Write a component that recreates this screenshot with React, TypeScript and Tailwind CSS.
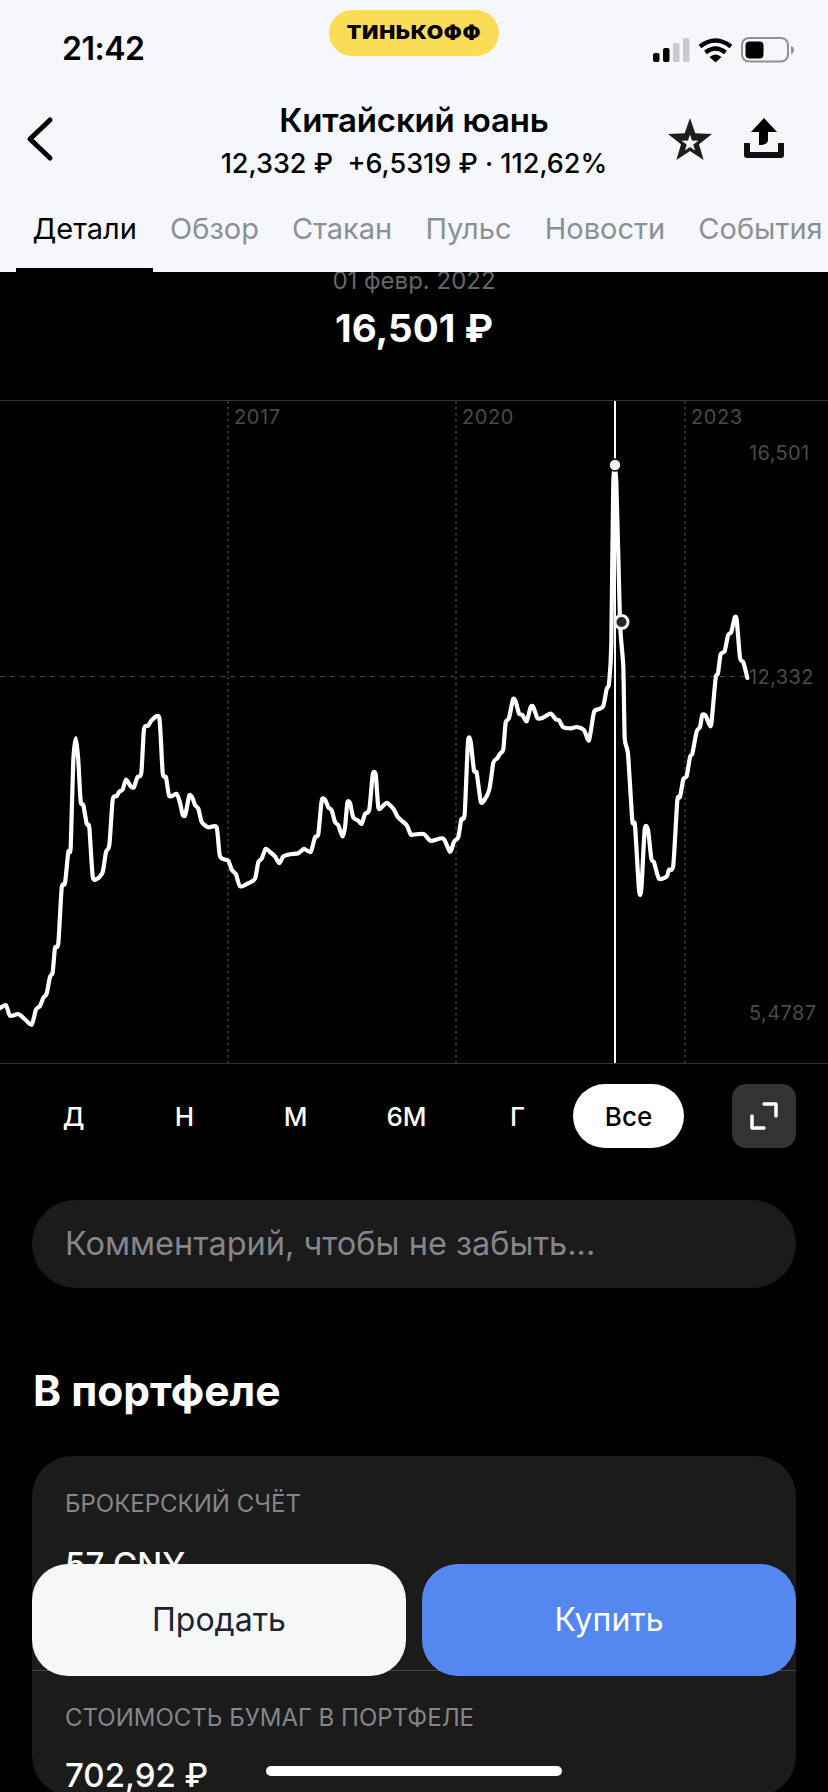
const FONT = { fontFamily: "Inter, 'Noto Sans', sans-serif" };

const TABS = ["Детали", "Обзор", "Стакан", "Пульс", "Новости", "События"];
const PERIODS = ["Д", "Н", "М", "6М", "Г", "Все"];

// price history, x in thirds of a pixel, y in 0.4464px steps, measured from the chart's left edge
const LEFT_SAMPLES: number[][] = [
  [0,1405],[18,1398],[30,1422],[55,1418],[75,1430],[95,1442],[108,1408],[120,1400],[130,1382],[140,1372],
  [150,1335],[158,1325],[165,1270],[175,1260],[185,1135],[195,1125],[205,1055],[212,1045],[220,850],[228,800],
  [235,850],[242,942],[250,950],[260,992],[268,1000],[278,1110],[292,1115],[308,1100],[318,1055],[328,1040],
  [338,938],[350,930],[358,920],[368,915],[378,893],[392,908],[402,910],[412,888],[424,878],[432,780],
  [445,772],[455,760],[478,755],[488,878],[498,888],[508,930],[530,925],[540,945],[548,972],[556,972],
  [568,928],[578,935],[585,950],[595,958],[605,988],[625,1000],[650,1000],[660,1065],[685,1075],[695,1095],
  [708,1105],[720,1132],[745,1125],[765,1115],[775,1078],[785,1070],[797,1048],[810,1055],[825,1065],[838,1080],
  [850,1065],[870,1060],[895,1058],[912,1048],[932,1055],[945,1022],[955,1015],[965,940],[975,938],[985,955],
  [995,962],[1005,988],[1015,995],[1027,1020],[1035,1000],[1042,945],[1050,945],[1060,978],[1075,985],[1085,992],
  [1095,970],[1108,960],[1118,882],[1127,882],[1135,955],[1145,955],[1160,945],[1180,958],[1192,975],[1205,985],
  [1220,995],[1232,1016],
];

const RIGHT_SAMPLES: number[][] = [
  [0,1016],[30,1015],[50,1030],[88,1025],[108,1055],[120,1032],[133,1022],[142,982],[152,970],[162,808],
  [170,808],[180,872],[188,878],[200,942],[210,940],[226,915],[238,855],[250,845],[258,835],[268,825],
  [275,765],[285,755],[297,713],[305,718],[315,745],[325,748],[338,762],[350,730],[358,730],[370,755],
  [385,755],[410,745],[425,758],[435,760],[447,775],[470,778],[488,775],[510,782],[525,805],[540,742],
  [555,735],[568,728],[578,690],[585,678],[592,590],[598,225],[607,225],[618,540],[628,640],[632,800],
  [642,835],[655,985],[663,995],[675,1140],[682,1140],[692,1005],[702,1005],[712,1070],[720,1078],[735,1115],
  [758,1110],[765,1095],[778,1085],[790,940],[798,932],[808,892],[818,885],[828,842],[835,835],[848,785],
  [858,775],[865,748],[875,750],[885,768],[892,768],[905,665],[912,655],[920,612],[932,605],[942,570],
  [952,562],[962,530],[968,535],[978,620],[988,630],[1000,665],
];

// the chart box starts 400px down the page, samples were taken from 380
const toPoint = (x: number, y: number, offset: number) => [offset + x / 3, y * 0.4464 - 20];

const POINTS = [
  ...LEFT_SAMPLES.map(([x, y]) => toPoint(x, y, 0)),
  ...RIGHT_SAMPLES.map(([x, y]) => toPoint(x, y, 414)),
];

// catmull-rom through every sample, with a low tension so the peaks stay sharp
function buildPath(points: number[][]) {
  const k = 0.11;
  let d = `M${points[0][0].toFixed(1)} ${points[0][1].toFixed(1)}`;
  for (let i = 0; i < points.length - 1; i++) {
    const p0 = points[Math.max(i - 1, 0)];
    const p1 = points[i];
    const p2 = points[i + 1];
    const p3 = points[Math.min(i + 2, points.length - 1)];
    const c1x = p1[0] + (p2[0] - p0[0]) * k;
    const c1y = p1[1] + (p2[1] - p0[1]) * k;
    const c2x = p2[0] - (p3[0] - p1[0]) * k;
    const c2y = p2[1] - (p3[1] - p1[1]) * k;
    d += ` C${c1x.toFixed(1)} ${c1y.toFixed(1)} ${c2x.toFixed(1)} ${c2y.toFixed(1)} ${p2[0].toFixed(1)} ${p2[1].toFixed(1)}`;
  }
  return d;
}

function StatusIcons() {
  return (
    <svg width="142" height="27" viewBox="0 0 142 27" className="block">
      <rect x="0" y="16" width="6.5" height="9" rx="2" fill="#000" />
      <rect x="10" y="11" width="6.5" height="14" rx="2" fill="#000" />
      <rect x="20" y="6" width="6.5" height="19" rx="1.5" fill="#c9cbce" />
      <rect x="30" y="1" width="6.5" height="24" rx="1.5" fill="#c9cbce" />
      <path d="M47 9.5 Q62.5 -2.5 78 9.5" fill="none" stroke="#000" strokeWidth="4.5" />
      <path d="M52.5 15.5 Q62.5 7.5 72.5 15.5" fill="none" stroke="#000" strokeWidth="4.5" />
      <path d="M56.5 20 Q62.5 15 68.5 20 L62.5 25.5 Z" fill="#000" />
      <rect x="89" y="1" width="46" height="23.5" rx="7" fill="none" stroke="#8f9193" strokeWidth="2" />
      <rect x="92.5" y="4.5" width="18" height="17" rx="4" fill="#000" />
      <path d="M138 9 Q141 10 141 13 Q141 16 138 17 Z" fill="#8f9193" />
    </svg>
  );
}

function Header() {
  return (
    <header className="h-[272px] bg-[#f5f7fa] text-black">
      <div className="relative h-[91px]">
        <span className="absolute left-[62px] top-[30px] text-[32px] leading-[38px] font-semibold tracking-[-0.5px]">
          21:42
        </span>
        <div className="absolute left-[329px] top-[10px] flex h-[46px] w-[170px] items-center justify-center rounded-full bg-[#fbdc57]">
          <span className="text-[19px] font-black tracking-[0.6px] [transform:scaleX(1.12)]">ТИНЬКОФФ</span>
        </div>
        <div className="absolute left-[653px] top-[37px]">
          <StatusIcons />
        </div>
      </div>

      <div className="relative h-[95px]">
        <svg width="30" height="46" viewBox="0 0 30 46" className="absolute left-[25px] top-[25px]">
          <path d="M25 4 L5 23 L25 42" fill="none" stroke="#000" strokeWidth="5" strokeLinecap="round" strokeLinejoin="round" />
        </svg>
        <div className="flex flex-col items-center pt-[9px]">
          <span className="text-[33px] leading-[40px] font-semibold tracking-[-0.2px]">Китайский юань</span>
          <span className="mt-[8px] whitespace-pre text-[27px] leading-[32px] font-medium">
            12,332 ₽{"  "}+6,5319 ₽ · 112,62%
          </span>
        </div>
        <svg width="44" height="42" viewBox="0 0 44 42" className="absolute left-[668px] top-[27px]">
          <path d="M22 0 L27.3 15.3 L44 16 L31 26.3 L35.6 42 L22 33 L8.4 42 L13 26.3 L0 16 L16.7 15.3 Z" fill="#1d1d1d" />
          <path d="M22 16.5 L24 22.5 L30.5 22.7 L25.3 26.6 L27 32.6 L22 29 L17 32.6 L18.7 26.6 L13.5 22.7 L20 22.5 Z" fill="#f5f7fa" />
        </svg>
        <svg width="40" height="40" viewBox="0 0 40 40" className="absolute left-[744px] top-[27px]">
          <path d="M20 0 L33 14 H24 V22 Q24 27 15 27 V14 H7 Z" fill="#000" />
          <path d="M3 25 V37 H37 V25" fill="none" stroke="#111" strokeWidth="6" strokeLinejoin="round" />
        </svg>
      </div>

      <nav className="flex h-[86px] overflow-hidden pl-[16px]">
        {TABS.map((tab, i) => (
          <div
            key={tab}
            className={
              "flex h-full shrink-0 items-start px-[16.6px] pt-[25px] text-[29px] leading-[36px] " +
              (i === 0 ? "border-b-[4px] border-black text-black" : "text-[#8c9096]")
            }
          >
            {tab}
          </div>
        ))}
      </nav>
    </header>
  );
}

function Chart() {
  const years = [
    { label: "2017", x: 228 },
    { label: "2020", x: 456 },
    { label: "2023", x: 685 },
  ];
  const prices = [
    { label: "16,501", top: 40 },
    { label: "12,332", top: 264 },
    { label: "5,4787", top: 600 },
  ];

  return (
    <div className="relative h-[664px] border-y border-[#333]">
      <svg width="828" height="662" viewBox="0 0 828 662" className="block">
        <line x1="0" x2="747" y1="275.5" y2="275.5" stroke="#444" strokeWidth="1" strokeDasharray="5 5" />
        {years.map((y) => (
          <line key={y.label} x1={y.x} x2={y.x} y1="0" y2="662" stroke="#444" strokeWidth="1.5" strokeDasharray="2.5 3.5" />
        ))}
        <path d={buildPath(POINTS)} fill="none" stroke="#fff" strokeWidth="4.2" strokeLinejoin="round" strokeLinecap="round" />
        <line x1="615" x2="615" y1="0" y2="662" stroke="#fff" strokeWidth="2" />
        <circle cx="615" cy="64" r="6" fill="#f2f2f2" stroke="#000" strokeWidth="1.5" />
        <circle cx="621.5" cy="221" r="6.5" fill="#1e2733" stroke="#f1f1f1" strokeWidth="3" />
      </svg>
      {years.map((y) => (
        <span
          key={y.label}
          className="absolute top-[4px] text-[20px] leading-[24px] tracking-[0.6px] text-[#4a4a4a]"
          style={{ left: y.x + 6 }}
        >
          {y.label}
        </span>
      ))}
      {prices.map((p) => (
        <span
          key={p.label}
          className="absolute left-[749px] text-[20px] leading-[24px] tracking-[0.4px] text-[#4a4a4a]"
          style={{ top: p.top }}
        >
          {p.label}
        </span>
      ))}
    </div>
  );
}

function PeriodRow() {
  return (
    <div className="flex h-[84px] items-end pl-[18px] pr-[32px]">
      <div className="flex flex-1">
        {PERIODS.map((p) => (
          <div
            key={p}
            className={
              "flex h-[64px] w-[111px] items-center justify-center rounded-full text-[26px] font-medium " +
              (p === "Все" ? "bg-white text-black" : "text-white")
            }
          >
            {p}
          </div>
        ))}
      </div>
      <div className="flex h-[64px] w-[64px] items-center justify-center rounded-[14px] bg-[#333]">
        <svg width="30" height="30" viewBox="0 0 30 30">
          <path d="M15 3 H27 V15 M3 15 V27 H15" fill="none" stroke="#fff" strokeWidth="3.5" strokeLinecap="round" strokeLinejoin="round" />
        </svg>
      </div>
    </div>
  );
}

function PortfolioCard() {
  return (
    <div className="mx-[32px] mt-[40px] rounded-[40px] bg-[#1b1b1c]">
      <div className="h-[215px] border-b border-[#444] px-[33px] pt-[33px]">
        <div className="text-[24px] leading-[30px] text-[#85858a]">БРОКЕРСКИЙ СЧЁТ</div>
        <div className="mt-[24px] text-[33px] leading-[42px] font-medium text-white">57 CNY</div>
      </div>
      <div className="px-[33px] pt-[32px]">
        <div className="text-[24px] leading-[30px] text-[#85858a]">СТОИМОСТЬ БУМАГ В ПОРТФЕЛЕ</div>
        <div className="mt-[21px] text-[33px] leading-[42px] font-medium text-white">702,92 ₽</div>
      </div>
    </div>
  );
}

export default function App() {
  return (
    <div className="relative h-[1792px] w-[828px] overflow-hidden bg-black" style={FONT}>
      <Header />

      <main>
        <div className="flex h-[128px] flex-col items-center overflow-hidden">
          <span className="-mt-[5px] text-[24px] leading-[28px] text-[#666]">01 февр. 2022</span>
          <span className="mt-[9px] text-[38.5px] leading-[48px] font-bold text-white">16,501 ₽</span>
        </div>
        <Chart />
        <PeriodRow />
        <div className="mx-[32px] mt-[52px] flex h-[88px] items-center rounded-full bg-[#1b1b1c] pl-[33px]">
          <span className="text-[32.5px] text-[#85858a]">Комментарий, чтобы не забыть...</span>
        </div>
        <h2 className="mt-[78px] pl-[33px] text-[42.5px] leading-[50px] font-bold text-white">В портфеле</h2>
        <PortfolioCard />
      </main>

      <div className="absolute left-[32px] top-[1564px] flex w-[764px] gap-[16px]">
        <button className="h-[112px] flex-1 rounded-[36px] bg-[#f6f8f8] text-[32px] text-[#1c2433]">Продать</button>
        <button className="h-[112px] flex-1 rounded-[36px] bg-[#5488f0] text-[32px] text-white">Купить</button>
      </div>
      <div className="absolute left-[266px] top-[1766px] h-[10px] w-[296px] rounded-full bg-white" />
    </div>
  );
}
